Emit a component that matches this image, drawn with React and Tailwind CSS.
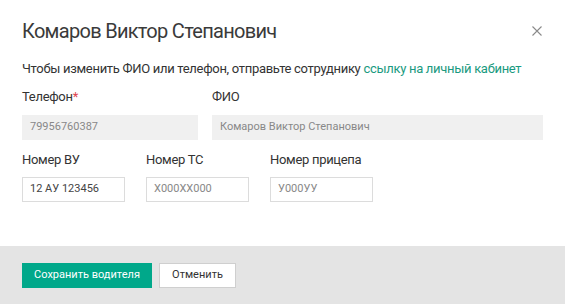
export default function App() {
  return (
    <div className="w-[565px] h-[304px] bg-white flex flex-col text-[#333] font-['Roboto',sans-serif]">
      <div className="flex-1 px-[22px] pt-[18px]">
        <div className="flex items-center justify-between">
          <h1 className="text-[20px] leading-[26px] tracking-[-0.7px] text-[#3a3a3a]">Комаров Виктор Степанович</h1>
          <button className="w-[12px] h-[12px] flex items-center justify-center">
            <svg width="10" height="10" viewBox="0 0 10 10" stroke="#8a8a8a" strokeWidth="1.1">
              <path d="M0.5 0.5L9.5 9.5M9.5 0.5L0.5 9.5" />
            </svg>
          </button>
        </div>
        <p className="mt-[16px] text-[13px] leading-[18px] tracking-[-0.3px] text-[#333] whitespace-nowrap">
          Чтобы изменить ФИО или телефон, отправьте сотруднику{" "}
          <a className="text-[#1a9a80]">ссылку на личный кабинет</a>
        </p>
        <div className="mt-[10px] flex gap-[14px]">
          <div className="w-[176px] flex flex-col">
            <label className="text-[13px] leading-[18px] tracking-[-0.3px] text-[#333]">
              Телефон<span className="text-[#e0454f]">*</span>
            </label>
            <div className="mt-[9px] h-[25px] bg-[#f0f0f0] px-[8px] flex items-center text-[11px] text-[#888]">79956760387</div>
          </div>
          <div className="flex-1 flex flex-col">
            <label className="text-[13px] leading-[18px] tracking-[-0.3px] text-[#333]">ФИО</label>
            <div className="mt-[9px] h-[25px] bg-[#f0f0f0] px-[8px] flex items-center text-[11px] text-[#888]">Комаров Виктор Степанович</div>
          </div>
        </div>
        <div className="mt-[11px] flex gap-[21px]">
          {[
            ["Номер ВУ", "12 АУ 123456", "text-[#444]"],
            ["Номер ТС", "Х000ХХ000", "text-[#888]"],
            ["Номер прицепа", "У000УУ", "text-[#888]"],
          ].map(([l, v, c]) => (
            <div key={l} className="w-[103px] flex flex-col">
              <label className="text-[13px] leading-[18px] tracking-[-0.3px] text-[#333] whitespace-nowrap">{l}</label>
              <div className={"mt-[8px] h-[25px] border border-[#dcdcdc] px-[7px] flex items-center text-[11px] " + c}>{v}</div>
            </div>
          ))}
        </div>
      </div>
      <div className="h-[58px] bg-[#e4e4e4] px-[22px] flex items-center gap-[7px]">
        <button className="h-[25px] w-[130px] bg-[#00a88a] text-white text-[11px] flex items-center justify-center">Сохранить водителя</button>
        <button className="h-[25px] w-[77px] bg-white border border-[#cfcfcf] text-[#333] text-[11px] flex items-center justify-center">Отменить</button>
      </div>
    </div>
  );
}
